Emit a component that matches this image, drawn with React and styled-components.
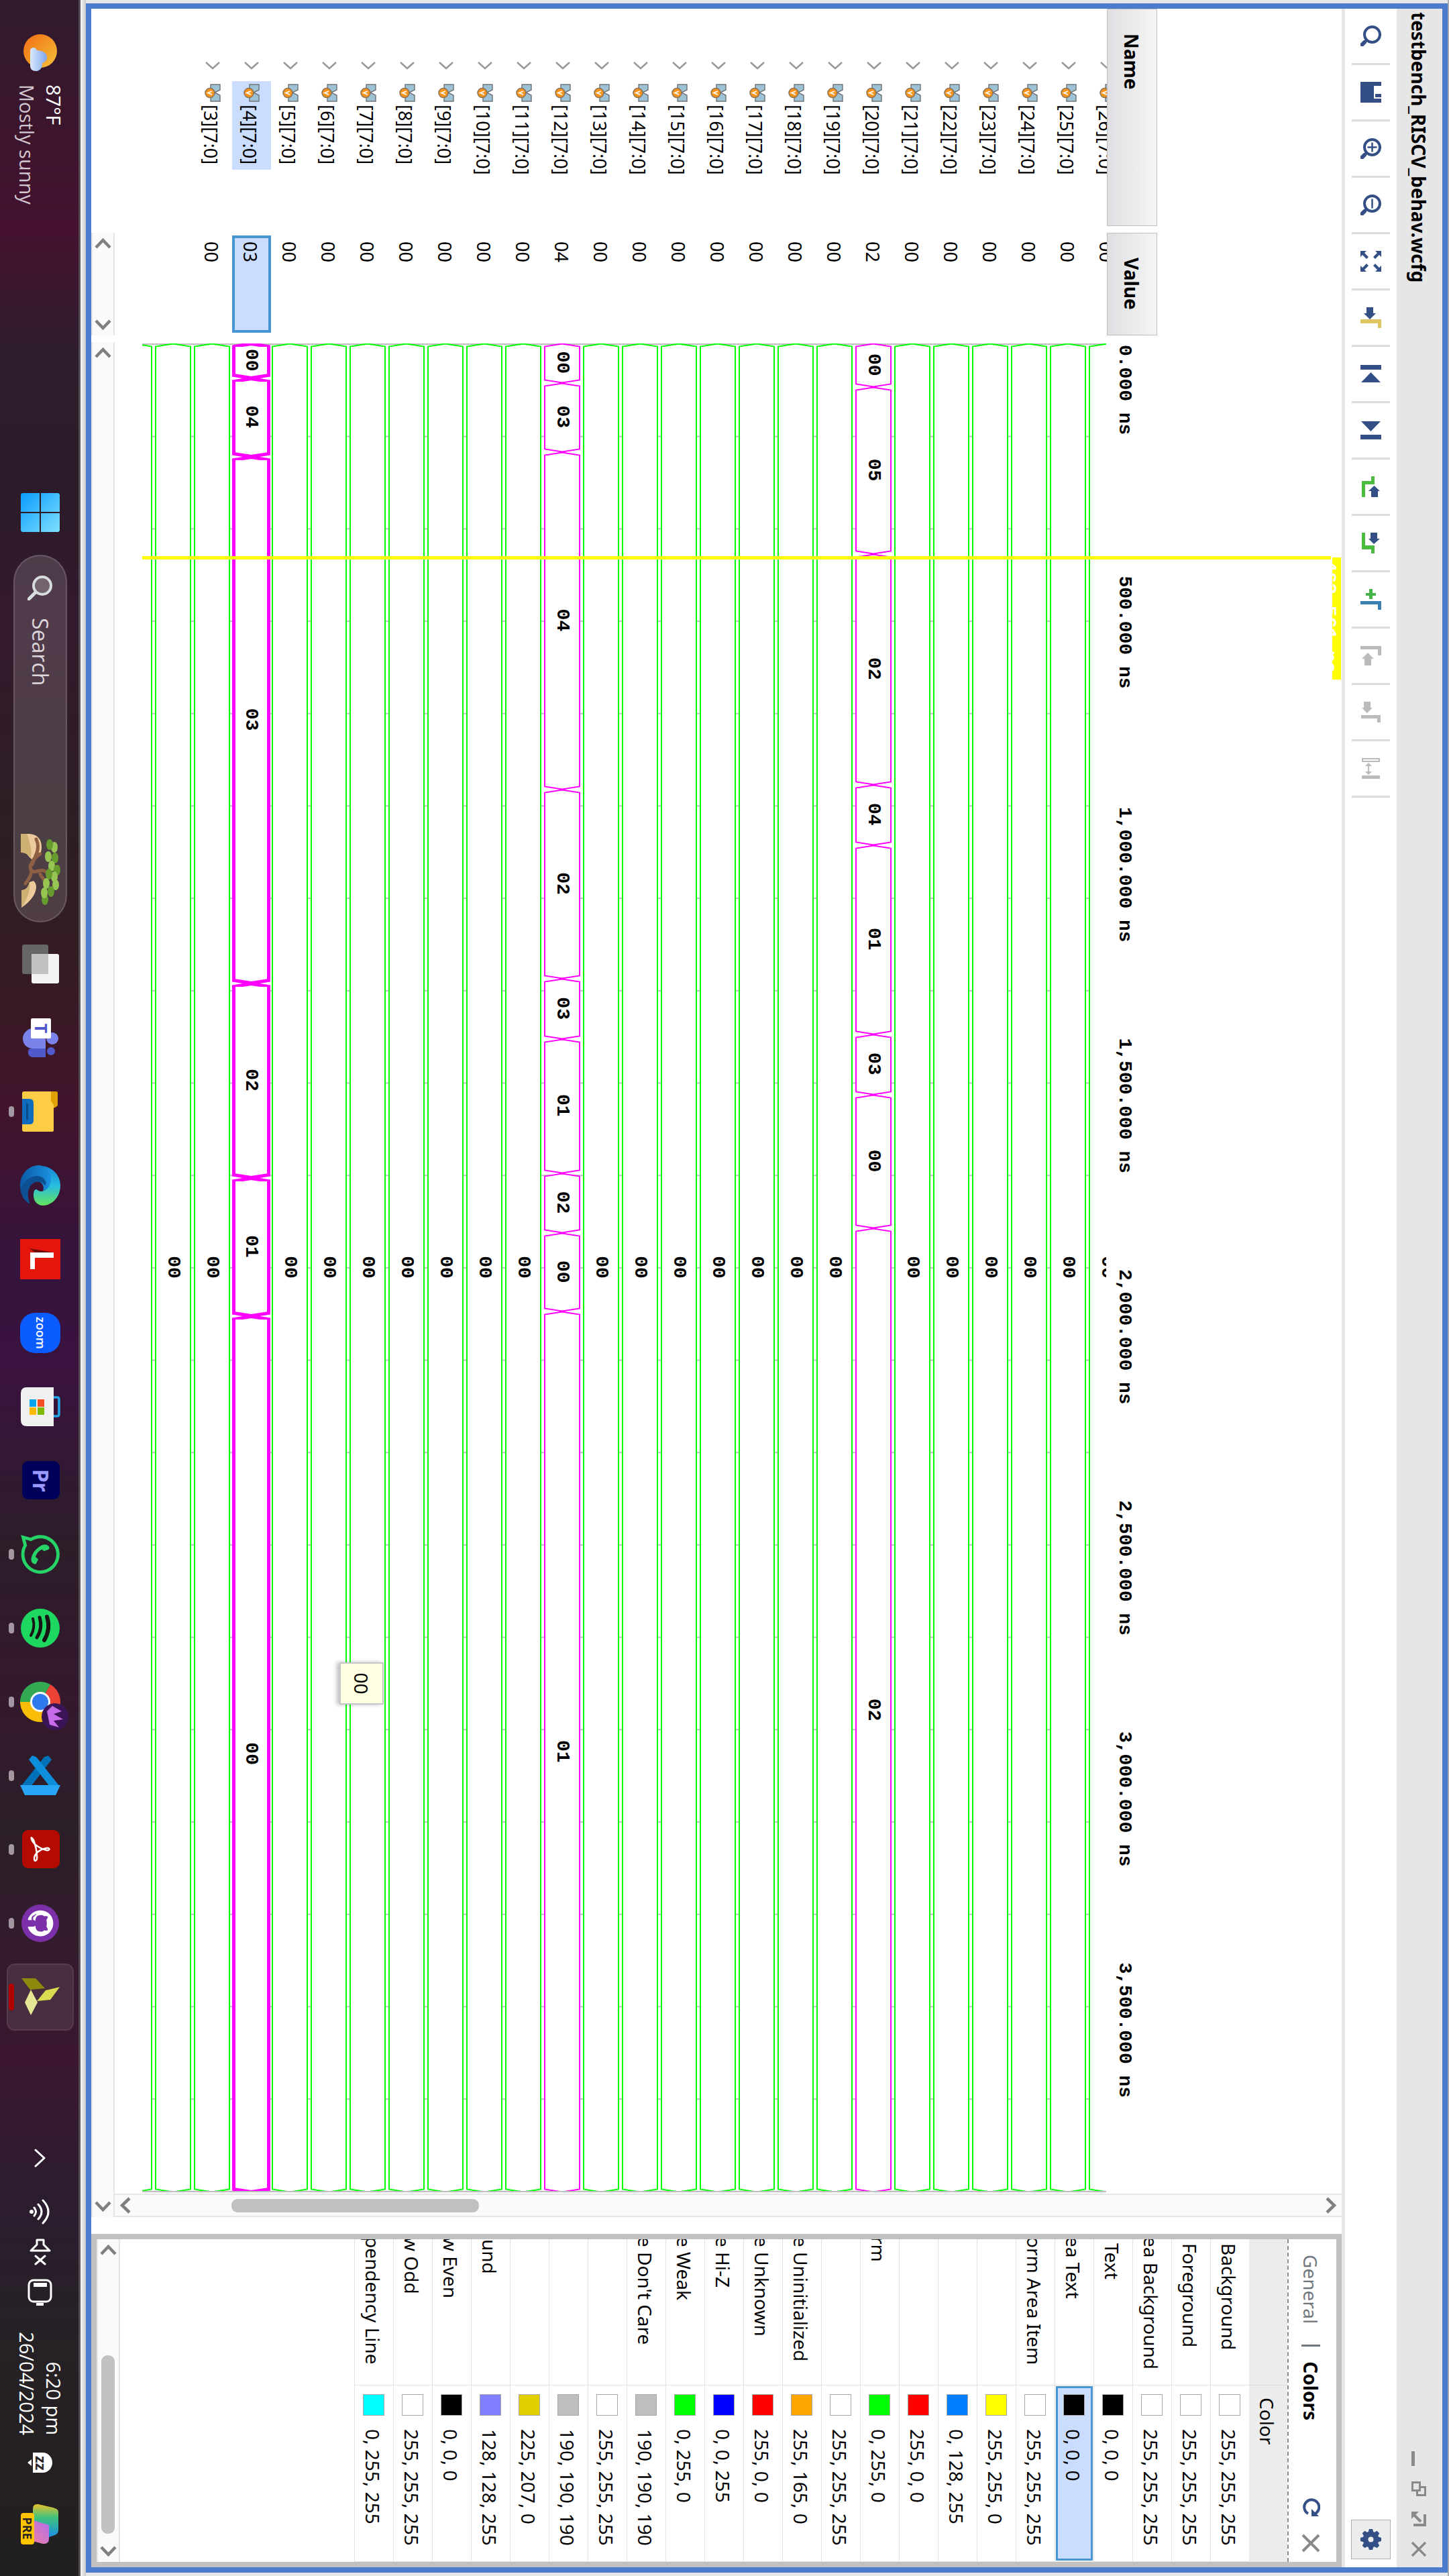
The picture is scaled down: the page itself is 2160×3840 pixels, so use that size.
import React from "react";
import styled, { createGlobalStyle } from "styled-components";
import { FaWhatsapp, FaGithub } from "react-icons/fa";

const NAVY = "#334f85";
const GREY = "#bbbbbb";
const UI = '"Noto Sans", "Open Sans", sans-serif';
const MONO = '"Liberation Mono", monospace';

const GlobalStyle = createGlobalStyle`
  html, body { margin: 0; height: 100%; overflow: hidden; background: #fff; }
  * { box-sizing: border-box; }
  button { font: inherit; color: inherit; padding: 0; margin: 0; border: 0; background: none; }
  ul { list-style: none; margin: 0; padding: 0; }
  svg { display: block; flex: none; }
`;

const Screen = styled.div`
  width: 100vh;
  height: 100vw;
  transform-origin: 0 0;
  transform: rotate(90deg) translateY(-100%);
  display: flex;
  flex-direction: column;
  font: 28px/38px ${UI};
  color: #000;
  overflow: hidden;
`;

const Desktop = styled.main`
  flex: 1;
  min-height: 0;
  display: flex;
  padding: 2px 5px 8px;
  background: linear-gradient(#a9a9a9 0 2px, #e6e6e6 2px calc(100% - 8px), #c9c9c9 calc(100% - 8px), #fafafa);
`;

const Window = styled.section`
  flex: 1;
  min-width: 0;
  display: flex;
  flex-direction: column;
  border: 8px solid #4a7bcf;
  background: #fff;
`;

const TitleBar = styled.header`
  height: 68px;
  flex: none;
  display: flex;
  align-items: center;
  justify-content: space-between;
  padding: 2px 16px 0 5px;
  background: #e6e6e6;
`;
const Title = styled.h1`
  margin: 0;
  font-size: 28px;
  line-height: 38px;
  font-weight: 700;
`;
const WindowButtons = styled.div`
  display: flex;
  gap: 23px;
`;
const IconButton = styled.button`
  display: flex;
  align-items: center;
  justify-content: center;
`;

const Toolbar = styled.div`
  height: 82px;
  flex: none;
  display: flex;
  align-items: center;
  padding-right: 12px;
  border-bottom: 5px solid #e6e6e6;
`;
const Tool = styled.button`
  width: 84px;
  height: 57px;
  display: flex;
  align-items: center;
  justify-content: center;
  border-right: 3px solid #dbdbdb;
`;
const SettingsButton = styled.button`
  width: 59px;
  height: 59px;
  margin-left: auto;
  display: flex;
  align-items: center;
  justify-content: center;
  border: 1px solid #b0b0b0;
  background: #ececec;
`;

const Body = styled.div`
  flex: 1;
  min-height: 0;
  display: flex;
`;

/* ---- signal lists ---- */
const SignalColumn = styled.div`
  flex: none;
  width: ${(p) => p.$width}px;
  margin-right: 10px;
  display: flex;
  flex-direction: column;
  padding-top: 275px;
`;
const ColumnHeader = styled.h2`
  margin: 0;
  flex: none;
  height: 75px;
  padding: 18px 0 0 36px;
  font-size: 28px;
  line-height: 38px;
  font-weight: 700;
  border: 1px solid #bdbdbd;
  background: linear-gradient(#f5f5f5, #dfdfe3);
`;
const ListView = styled.div`
  flex: 1;
  min-height: 0;
  overflow: hidden;
`;
const SignalList = styled.ul`
  margin-top: -30px;
`;
const SignalRow = styled.li`
  height: 58px;
  display: flex;
  align-items: center;
  padding-left: 79px;
  gap: 17px;
`;
const SignalName = styled.span`
  height: 58px;
  display: flex;
  align-items: center;
  gap: 4px;
  padding: 0 8px 0 4px;
  font-size: 27px;
  background: ${(p) => (p.$selected ? "#cbddfe" : "transparent")};
`;
const SignalText = styled.span`
  padding-top: 5px;
`;
const ValueRow = styled.li`
  height: 58px;
  margin: 0 4px;
  padding: ${(p) => (p.$selected ? "8px 5px 0" : "12px 9px 0")};
  font-size: 27px;
  border: ${(p) => (p.$selected ? "4px solid #4596d2" : "0")};
  background: ${(p) => (p.$selected ? "#cbddfe" : "transparent")};
`;

/* ---- scroll bars ---- */
const HBar = styled.div`
  flex: none;
  height: 35px;
  display: flex;
  align-items: center;
  justify-content: space-between;
  padding: 0 8px;
  background: #fafafa;
  border: solid #e6e6e6;
  border-width: 2px 0;
`;
const VBar = styled.div`
  flex: none;
  width: 35px;
  display: flex;
  flex-direction: column;
  align-items: center;
  padding: 8px 0;
  background: #fafafa;
  border: solid #e6e6e6;
  border-width: 0 2px;
`;
const Thumb = styled.div`
  width: ${(p) => p.$w};
  height: ${(p) => p.$h};
  border-radius: 9px;
  background: #c1c1c1;
`;
const Fill = styled.div`
  flex: ${(p) => p.$grow};
`;

/* ---- wave area ---- */
const WavePane = styled.div`
  flex: 1;
  min-width: 0;
  display: flex;
  flex-direction: column;
`;
const WaveMain = styled.div`
  flex: 1;
  min-height: 0;
  display: flex;
`;
const Chart = styled.div`
  flex: 1;
  min-width: 0;
  position: relative;
  display: flex;
  flex-direction: column;
  padding: 275px 2px 41px;
`;
const Ruler = styled.div`
  flex: none;
  height: 76px;
  display: flex;
`;
const Tick = styled.span`
  flex: 1 1 0;
  min-width: 0;
  padding: 33px 0 0 2px;
  font: 700 28px/32px ${MONO};
  white-space: nowrap;
`;
const Tracks = styled.div`
  flex: 1;
  min-height: 0;
  overflow: hidden;
  border-right: 2px solid #bebebe;
  background: linear-gradient(to right, #bebebe 2px, transparent 2px) 0 0 / 5% 100%;
`;
const TrackList = styled.ul`
  margin-top: -31px;
`;
const Track = styled.li`
  height: 58px;
  padding: ${(p) => (p.$selected ? "1px 0 0" : "3px 0 1px")};
  display: flex;
  margin-right: -2px;
`;
const Segment = styled.span`
  flex: ${(p) => p.$span} 1 0;
  min-width: 0;
  display: flex;
`;
const SegmentBody = styled.span`
  flex: 1;
  min-width: 0;
  display: flex;
  align-items: center;
  justify-content: center;
  padding-right: 2px;
  border: solid ${(p) => p.$color};
  border-width: ${(p) => p.$weight}px 0;
  background: #fff;
  font: 700 28px/32px ${MONO};
`;
const CursorLine = styled.div`
  position: absolute;
  top: 16px;
  bottom: 41px;
  left: calc(2px + 11.5%);
  width: 5px;
  background: #ff0;
`;
const CursorFlag = styled.div`
  position: absolute;
  top: 1px;
  left: calc(4px + 11.5%);
  width: 182px;
  height: 13px;
  padding: 2px 0 0 4px;
  overflow: hidden;
  background: #ff0;
  color: #fff;
  font: 700 28px/32px ${MONO};
  white-space: nowrap;
`;
const Tooltip = styled.div`
  position: absolute;
  top: 1428px;
  left: calc(100% - 792px);
  width: 63px;
  height: 66px;
  display: flex;
  align-items: center;
  justify-content: center;
  font-size: 28px;
  border: 2px solid #c6c6c6;
  background: #ffffe1;
  box-shadow: 0 4px 6px rgba(0, 0, 0, 0.25);
`;

/* ---- colour settings ---- */
const Panel = styled.aside`
  flex: none;
  width: 497px;
  margin-left: 25px;
  display: flex;
  flex-direction: column;
  border: 8px solid #c1c1c1;
`;
const PanelHead = styled.div`
  height: 73px;
  flex: none;
  display: flex;
  align-items: center;
  padding: 4px 14px 0 23px;
  border-bottom: 2px dashed #8d8d8d;
`;
const Tab = styled.button`
  font-weight: ${(p) => (p.$active ? 700 : 400)};
  color: ${(p) => (p.$active ? "#000" : "#70777c")};
`;
const TabRule = styled.span`
  width: 3px;
  height: 28px;
  margin: 0 22px 0 31px;
  background: #6f7a80;
`;
const PanelActions = styled.div`
  margin-left: auto;
  display: flex;
  gap: 26px;
`;
const TableView = styled.div`
  flex: 1;
  min-height: 0;
  overflow: hidden;
`;
const ColorTable = styled.table`
  width: 100%;
  table-layout: fixed;
  border-collapse: separate;
  border-spacing: 0;
  th, td { height: 58px; padding: 0; text-align: left; font-weight: 400; }
  th { height: 57px; background: #ececec; padding-top: 3px; }
`;
const NameHead = styled.th`
  width: 218px;
  border-right: 1px solid #dcdcdc;
`;
const ColorHead = styled.th`
  span { padding-left: 18px; }
`;
const NameCell = styled.td`
  border: solid #e2e2e2;
  border-width: 0 1px 1px 0;
`;
const NameText = styled.div`
  overflow: hidden;
  white-space: nowrap;
  padding-top: 3px;
  text-indent: ${(p) => p.$indent}px;
`;
const ColorCell = styled.td`
  border-bottom: 1px solid #e2e2e2;
  border-right: 1px solid #e2e2e2;
`;
const ColorBox = styled.div`
  height: 55px;
  margin: 0 1px;
  padding-left: ${(p) => (p.$selected ? 9 : 12)}px;
  display: flex;
  align-items: center;
  gap: 20px;
  border: ${(p) => (p.$selected ? "3px solid #4596d2" : "0")};
  background: ${(p) => (p.$selected ? "#cbddfe" : "transparent")};
`;
const Swatch = styled.span`
  width: 32px;
  height: 32px;
  flex: none;
  border: 1px solid #a6a6a6;
  background: rgb(${(p) => p.$rgb});
`;
const Rgb = styled.span`
  padding-top: 3px;
  white-space: nowrap;
`;

/* ---- taskbar ---- */
const Taskbar = styled.footer`
  height: 120px;
  flex: none;
  display: flex;
  align-items: center;
  border-top: 3px solid #514a50;
  background: linear-gradient(to right, #2f1b2b 0, #3c152d 5%, #45122f 9%, #2c1e2c 14%, #2a1c28 18%, #33192c 24%,
    #2c1e24 32%, #331c22 37%, #42142c 43%, #35133c 49%, #3a123f 53%, #2c1d29 60%, #34182d 66%, #2b1f28 71%,
    #331c2c 75%, #3b1730 80%, #2c1c30 85%, #252125 91%, #221f20 100%);
  color: #fff;
  font: 29px/40px "Open Sans", "Noto Sans", sans-serif;
  padding: 0 46px 3px 50px;
`;
const Weather = styled.button`
  display: flex;
  align-items: center;
  gap: 18px;
  width: 664px;
  text-align: left;
`;
const Lines = styled.span`
  display: flex;
  flex-direction: column;
  text-align: ${(p) => p.$align || "left"};
`;
const Muted = styled.span`
  color: #d3c7cf;
`;
const Slot = styled.button`
  position: relative;
  width: 100px;
  height: 100px;
  flex: none;
  margin-right: 10px;
  display: flex;
  align-items: center;
  justify-content: center;
  border-radius: 12px;
  background: ${(p) => (p.$active ? "rgba(255,255,255,.09)" : "transparent")};
  box-shadow: ${(p) => (p.$active ? "inset 0 0 0 2px rgba(255,255,255,.07)" : "none")};
`;
const RunningDot = styled.span`
  position: absolute;
  bottom: 3px;
  width: ${(p) => (p.$active ? 40 : 16)}px;
  height: 8px;
  border-radius: 4px;
  background: ${(p) => (p.$active ? "#b00000" : "#a397a1")};
`;
const SearchBox = styled.label`
  width: 548px;
  height: 80px;
  flex: none;
  margin: 0 12px 0 3px;
  padding: 0 18px 0 28px;
  display: flex;
  align-items: center;
  gap: 26px;
  border-radius: 40px;
  border: 2px solid rgba(255, 255, 255, 0.14);
  background: rgba(255, 255, 255, 0.15);
`;
const SearchInput = styled.input`
  flex: 1;
  min-width: 0;
  border: 0;
  padding: 0;
  outline: 0;
  background: none;
  font: 32px/40px "Open Sans", "Noto Sans", sans-serif;
  color: #dcd5da;
  &::placeholder { color: #dcd5da; opacity: 1; }
`;
const Tray = styled.div`
  margin-left: auto;
  display: flex;
  align-items: center;
`;
const TrayIcons = styled.div`
  display: flex;
  align-items: center;
  gap: 20px;
  margin: 0 39px 0 46px;
`;
const TrayGap = styled.div`
  width: ${(p) => p.$w}px;
`;

/* ---- toolbar drawings, 31 units square ---- */
const Svg = ({ s = 31, w, h, box, children, ...rest }) => (
  <svg width={w || s} height={h || s} viewBox={box || `0 0 ${w || s} ${h || s}`} fill="none" aria-hidden="true" {...rest}>
    {children}
  </svg>
);
const Lens = ({ children }) => (
  <Svg>
    <circle cx="13.5" cy="13.5" r="11.5" stroke={NAVY} strokeWidth="4" />
    <path d="M22 22l2 2" stroke={NAVY} strokeWidth="4" />
    <path d="M25 25l3.500 3.500" stroke={NAVY} strokeWidth="6" strokeLinecap="round" />
    {children}
  </Svg>
);
const toolIcons = [
  ["Find", <Lens />],
  ["Save", <Svg><path fill={NAVY} fillRule="evenodd" d="M0 0H6V11H25V0H31V31H0ZM18 0h5v9h-5Z" /></Svg>],
  ["Zoom in", <Lens><path d="M6.500 13.500h14M13.500 6.500v14" stroke={NAVY} strokeWidth="2.500" /></Lens>],
  ["Zoom out", <Lens><path d="M6.500 13.500h14" stroke={NAVY} strokeWidth="2.500" /></Lens>],
  ["Zoom fit", <Svg><path fill={NAVY} d="M0 0h9l-3 3 6 6-3 3-6-6-3 3ZM31 0v9l-3-3-6 6-3-3 6-6-3-3ZM0 31v-9l3 3 6-6 3 3-6 6 3 3ZM31 31h-9l3-3-6-6 3-3 6 6 3-3Z" /></Svg>],
  ["Go to cursor", <Svg><path fill="#dfc663" d="M18 0h13v5h-7v26h-6Z" /><path fill={NAVY} d="M0 12h9V8l9 9-9 9v-4H0Z" /></Svg>],
  ["Go to start", <Svg><path fill={NAVY} d="M2 0h7v31H2ZM13 15.500 28 1v29Z" /></Svg>],
  ["Go to end", <Svg><path fill={NAVY} d="M2 1l15 14.500L2 30ZM22 0h7v31h-7Z" /></Svg>],
  ["Previous transition", <Svg><path fill="#4cbb3f" d="M0 10h12v14h19v5H7V15H0Z" /><path fill={NAVY} d="M14 10.500 22 2v3h9v10h-9v4Z" /></Svg>],
  ["Next transition", <Svg><path fill="#4cbb3f" d="M0 24h19V10h12v5h-6v14H0Z" /><path fill={NAVY} d="M0 6h9V2l8 9-8 8v-3H0Z" /></Svg>],
  ["Add marker", <Svg><path fill="#3a80b0" d="M18 0h13v5h-8v26h-5Z" /><path fill="#46b449" d="M6 8h4v5h5v5h-5v5H6v-5H0v-5h6Z" /></Svg>],
  ["Previous marker", <Svg><path fill={GREY} d="M1 0h14v5H6v26H1ZM11 20l9-9v4h10v10H20v4Z" /></Svg>],
  ["Next marker", <Svg><path fill={GREY} d="M20 1h11v5h-6v24h-5ZM0 16h9v-3l8 8-8 8v-3H0Z" /></Svg>],
  ["Swap cursors", <Svg><path stroke={GREY} strokeWidth="2" d="M1 3h4v25H1Z" /><path fill={GREY} d="M26 2h5v27h-5ZM7 19l5-5v4h8v-4l5 5-5 5v-4h-8v4Z" /></Svg>],
];
const Gear = () => (
  <Svg>
    <circle cx="15.500" cy="15.500" r="8" stroke={NAVY} strokeWidth="8" />
    {[0, 45, 90, 135, 180, 225, 270, 315].map((a) => (
      <path key={a} fill={NAVY} transform={`rotate(${a} 15.5 15.5)`} d="M11.500 5 13 0h5l1.500 5Z" />
    ))}
  </Svg>
);
const windowIcons = [
  ["Minimize", <Svg s={22}><path fill="#8a8a8a" d="M0 17h22v5H0Z" /></Svg>],
  ["Restore", <Svg s={22}><path stroke="#8a8a8a" strokeWidth="3" d="M1.500 9.500h12v11h-12ZM8.500 9.500v-8h12v12h-7" /></Svg>],
  ["Float", <Svg s={22}><path stroke="#8a8a8a" strokeWidth="4" d="M4 2h16v17M15 8 5 18" /><path fill="#8a8a8a" d="M0 22v-11l11 11Z" /></Svg>],
  ["Close", <Svg s={22}><path stroke="#8a8a8a" strokeWidth="3.500" d="M1 1l20 20M21 1 1 21" /></Svg>],
];

const arrows = {
  left: [16, 25, "M14 2 3 12.5 14 23"],
  right: [16, 25, "M2 2 13 12.5 2 23"],
  up: [25, 16, "M2 14 12.5 3 23 14"],
  down: [25, 16, "M2 2 12.5 13 23 2"],
};
const Arrow = ({ dir }) => {
  const [w, h, d] = arrows[dir];
  return (
    <IconButton aria-label={`Scroll ${dir}`}>
      <Svg w={w} h={h}><path d={d} stroke="#808080" strokeWidth="4.500" /></Svg>
    </IconButton>
  );
};

const Expand = () => (
  <Svg w={12} h={22}><path d="M1 1l9 10-9 10" stroke="#999" strokeWidth="2.500" /></Svg>
);
const BusIcon = () => (
  <Svg w={27} h={24}>
    <path d="M1 1h8l4 8 4-8h9v14H1Z" fill="#9dc1d5" stroke="#71777b" strokeWidth="1.500" />
    <circle cx="13.500" cy="16" r="7" fill="#f7941e" stroke="#8b7355" strokeWidth="1.500" />
    <path d="M11 13l2.500 6 2.500-6" stroke="#fff" strokeWidth="1.800" />
  </Svg>
);

/* ---- signal data ---- */
const END = 4000;
const changes = {
  4: [[0, "00"], [75, "04"], [245, "03"], [1385, "02"], [1805, "01"], [2105, "00"]],
  12: [[0, "00"], [85, "03"], [235, "04"], [965, "02"], [1375, "03"], [1505, "01"], [1795, "02"], [1925, "00"], [2095, "01"]],
  20: [[0, "00"], [95, "05"], [455, "02"], [955, "04"], [1085, "01"], [1495, "03"], [1625, "00"], [1915, "02"]],
};
const values = { 4: "03", 12: "04", 20: "02" };
const SELECTED = 4;
const indices = Array.from({ length: 26 }, (_, i) => 26 - i);
const listed = indices.filter((n) => n >= 3);

const Cap = ({ flip, color, weight }) => {
  const o = weight / 2;
  return (
    <svg width="5" height="100%" viewBox="0 0 5 54" preserveAspectRatio="none" overflow="visible"
      transform={flip ? "scale(-1 1)" : undefined} aria-hidden="true">
      <path d={`M5 ${o}H4.500L.500 27 4.500 ${54 - o}H5`} fill="#fff" stroke={color} strokeWidth={weight} />
    </svg>
  );
};

const Waveform = ({ n }) => {
  const list = changes[n] || [[0, "00"]];
  const color = changes[n] ? "#ff00ff" : "#00ff00";
  const weight = n === SELECTED ? 5 : 2;
  return (
    <Track $selected={n === SELECTED}>
      {list.map(([t, v], i) => (
        <Segment key={t} $span={(i + 1 < list.length ? list[i + 1][0] : END) - t}>
          <Cap color={color} weight={weight} />
          <SegmentBody $color={color} $weight={weight}>{v}</SegmentBody>
          <Cap flip color={color} weight={weight} />
        </Segment>
      ))}
    </Track>
  );
};

const colorRows = [
  ["Background", "255, 255, 255", 6],
  ["Foreground", "255, 255, 255", 6],
  ["ea Background", "255, 255, 255", -4],
  ["Text", "0, 0, 0", 6],
  ["ea Text", "0, 0, 0", -4],
  ["orm Area Item", "255, 255, 255", -4],
  ["", "255, 255, 0"],
  ["", "0, 128, 255"],
  ["", "255, 0, 0"],
  ["rm", "0, 255, 0", -4],
  ["", "255, 255, 255"],
  ["e Uninitialized", "255, 165, 0", -4],
  ["e Unknown", "255, 0, 0", -4],
  ["e Hi-Z", "0, 0, 255", -4],
  ["e Weak", "0, 255, 0", -4],
  ["e Don't Care", "190, 190, 190", -4],
  ["", "255, 255, 255"],
  ["", "190, 190, 190"],
  ["", "225, 207, 0"],
  ["und", "128, 128, 255", 0],
  ["w Even", "0, 0, 0", -4],
  ["w Odd", "255, 255, 255", -4],
  ["pendency Line", "0, 255, 255", -4],
];
const SELECTED_COLOR = 4;

const ticks = ["0.000 ns", "500.000 ns", "1,000.000 ns", "1,500.000 ns", "2,000.000 ns", "2,500.000 ns", "3,000.000 ns", "3,500.000 ns"];

/* ---- taskbar drawings ---- */
const WindowsLogo = () => (
  <Svg s={58}>
    <defs><linearGradient id="win" x1="0" y1="1" x2="1" y2="0"><stop stopColor="#0a9bff" /><stop offset="1" stopColor="#7fe0ff" /></linearGradient></defs>
    <path fill="url(#win)" d="M2 0H28V28H0V2ZM30 0H56l2 2V28H30ZM0 30H28V58H2L0 56ZM30 30H58V56l-2 2H30Z" />
  </Svg>
);
const SunCloud = () => (
  <Svg s={58}>
    <defs>
      <linearGradient id="sun" x1="0" y1="1" x2="1" y2="0"><stop stopColor="#f26a12" /><stop offset="1" stopColor="#f3c43a" /></linearGradient>
      <linearGradient id="cloud" x1="0" y1="0" x2="0" y2="1"><stop stopColor="#7fa6ee" /><stop offset="1" stopColor="#dbe9fd" /></linearGradient>
    </defs>
    <circle cx="26" cy="29" r="25" fill="url(#sun)" />
    <path fill="url(#cloud)" d="M26 44c-6 0-7-8-1-10 0-8 4-15 10-15 6 0 8 4 9 7 7-1 12 4 12 9 0 6-3 9-8 9Z" />
  </Svg>
);
const leaves = [[20, 9], [16, 16], [34, 18], [36, 8], [48, 13], [54, 5], [64, 9], [60, 17], [76, 7], [86, 14], [74, 21], [98, 23], [88, 24]];
const Bonsai = () => (
  <Svg w={112} h={60}>
    <path fill="#ecca9c" d="M0 59V46C1 34 8 28 20 28c12 0 16 6 20 12l-5 6c-6 4-8 8-7 13ZM70 40c6-6 12-4 18-2 10 4 18 14 22 20H84c0-6-4-10-12-12Z" />
    <path fill="#cdb072" d="M0 59V50c10-4 24-8 36-6-6 4-8 9-8 15ZM72 46c12-2 26 4 38 12H84c0-6-4-10-12-12Z" />
    <path d="M8 36c10-5 22-2 34 6 8 6 16 2 14-6-1-6-4-10 2-16M30 30c4 8 10 10 16 12M60 30c6-2 8-8 16-8M52 44c8-2 14 2 22 8" stroke="#8f5f43" strokeWidth="5" strokeLinecap="round" />
    {leaves.map(([x, y], i) => (
      <ellipse key={i} cx={x} cy={y} rx="8" ry="5" fill={i % 2 ? "#689b2e" : "#96c651"} />
    ))}
  </Svg>
);
const TaskView = () => (
  <Svg s={60}><rect y="18" x="1" width="44" height="39" rx="3" fill="#666" /><rect x="15" y="2" width="44" height="41" rx="3" fill="#f2f2f2" /><path fill="#c2c2c2" d="M15 18h30v25H15Z" /></Svg>
);
const Teams = () => (
  <Svg s={60}>
    <circle cx="31" cy="12" r="9" fill="#7b83eb" /><circle cx="50" cy="14" r="6" fill="#5059c9" />
    <path fill="#5059c9" d="M38 22h21v19c0 8-9 8-12 6Z" /><path fill="#7b83eb" d="M16 22h30v18c0 12-8 16-15 16s-15-6-15-16Z" />
    <rect x="1" y="14" width="30" height="30" rx="2" fill="#fff" />
    <text x="16" y="38" textAnchor="middle" fontFamily="Open Sans" fontWeight="700" fontSize="25" fill="#5059c9">T</text>
  </Svg>
);
const Folder = () => (
  <Svg s={60}>
    <path fill="#e0a100" d="M0 6q0-2 2-2h18q2 0 4 4l2 6H0Z" /><path fill="#ffcd45" d="M0 14q10 0 14 0l6-4h38q2 0 2 3v41q0 3-3 3H3q-3 0-3-3Z" />
    <path fill="#0f6cbd" d="M11 57V46q0-6 6-6h26q6 0 6 6v11Z" /><path fill="#0a4a86" d="M18 48h24v3H18Z" />
  </Svg>
);
const Edge = () => (
  <Svg s={60}>
    <defs>
      <linearGradient id="e1" x1="0" y1="0" x2="1" y2="0"><stop stopColor="#1583d6" /><stop offset=".5" stopColor="#27bde0" /><stop offset="1" stopColor="#63e35c" /></linearGradient>
      <linearGradient id="e2" x1="0" y1="0" x2="0" y2="1"><stop stopColor="#1a91e0" /><stop offset="1" stopColor="#0c59a4" /></linearGradient>
    </defs>
    <path fill="url(#e1)" d="M1 26C4 10 16 0 30 0c18 0 30 13 30 26 0 9-7 14-15 14-7 0-9-2-9-4s3-3 3-7c0-6-6-11-14-11C14 18 4 20 1 26Z" />
    <path fill="url(#e2)" d="M0 32C1 20 10 14 20 14c10 0 17 5 18 12-8-3-15 3-14 10 1 8 12 14 24 12 4 0 6-2 8-2 1 0 1 1 0 2-6 8-16 12-26 12C14 60 0 48 0 32Z" />
    <path fill="#0d4f93" d="M24 22c-8 4-9 12-7 19 3 10 11 17 21 18 8-1 14-5 18-11 1-1 0-2-1-1-14 5-28-1-30-11-1-5 0-10 5-13-2-2-4-2-6-1Z" />
  </Svg>
);
const LMark = () => (
  <Svg s={60}><path fill="#e5170c" d="M0 0h60v60H0Z" /><path fill="#6d0a06" d="M14 46l6-36v28Z" /><path fill="#fff" d="M20 10h8v28h17v7H20Z" /></Svg>
);
const Zoom = () => (
  <Svg s={60}><rect width="60" height="60" rx="22" fill="#0b5cff" /><text x="30" y="36" textAnchor="middle" fontFamily="Open Sans" fontWeight="600" fontSize="18" fill="#fff">zoom</text></Svg>
);
const Store = () => (
  <Svg s={60}>
    <path d="M16 12V5q0-3 3-3h22q3 0 3 3v7" stroke="#22a7e8" strokeWidth="3.500" />
    <path fill="#f0f0f0" d="M1 10h58v40q0 9-9 9H10q-9 0-9-9Z" />
    <path fill="#f25022" d="M19 24h11v10H19Z" /><path fill="#7fba00" d="M31 24h11v10H31Z" /><path fill="#00a4ef" d="M19 36h11v10H19Z" /><path fill="#ffb900" d="M31 36h11v10H31Z" />
  </Svg>
);
const Premiere = () => (
  <Svg s={60}><rect x="1" y="1" width="57" height="56" rx="9" fill="#00005b" /><text x="30" y="41" textAnchor="middle" fontFamily="Open Sans" fontWeight="700" fontSize="32" fill="#9999ff">Pr</text></Svg>
);
const Spotify = () => (
  <Svg s={60}><circle cx="30" cy="30" r="29" fill="#1ed760" /><g stroke="#191414" strokeLinecap="round"><path d="M13 20q18-6 35 4" strokeWidth="6" /><path d="M14 31q16-5 30 4" strokeWidth="5" /><path d="M16 41q13-4 25 3" strokeWidth="4" /></g></Svg>
);
const Chrome = () => (
  <Svg s={60} overflow="visible">
    <path fill="#ea4335" d="M30 30 4 15A30 30 0 0 1 56 15Z" /><path fill="#fbbc05" d="M30 30 56 15A30 30 0 0 1 30 60Z" /><path fill="#34a853" d="M30 30v30A30 30 0 0 1 4 15Z" />
    <circle cx="30" cy="30" r="15" fill="#fff" /><circle cx="30" cy="30" r="12" fill="#2f7bed" />
    <circle cx="52" cy="8" r="20" fill="#3b1458" />
    <path d="M36 12l8-14 4 12 8-14 2 14 10-8-4 14-20 4Z" fill="#c86be8" />
  </Svg>
);
const VsCode = () => (
  <Svg s={60}><path fill="#0070b8" d="M0 18l6-5 40 31v15L2 24Z" /><path fill="#0d8fdc" d="M0 42l6 5L46 16V1L2 36Z" /><path fill="#29a5f5" d="M44 0l15 7v46l-15 7Z" /></Svg>
);
const Acrobat = () => (
  <Svg s={60}><rect x="1" y="1" width="57" height="56" rx="9" fill="#b30b00" /><path d="M14 43c6-1 14-10 17-22 1-6-4-6-3 0 2 10 8 18 16 18 5 0 3-5-4-4-8 0-16 2-24 5-5 3-4 4-2 3Z" stroke="#fff" strokeWidth="2.500" /></Svg>
);
const GithubDesktop = () => (
  <Svg s={60}><circle cx="30" cy="30" r="28" fill="#7b2fa8" /><FaGithub x="10" y="10" size="40" color="#fff" /></Svg>
);
const Vivado = () => (
  <Svg s={58}><path fill="#8c8a0c" d="M1 57V36l15-14 2 22Z" /><path fill="#d8dc50" d="M14 0l19 14 2 20-16-13Z" /><path fill="#e6e794" d="M18 43l19-10 19 10-19 9Z" /></Svg>
);

const apps = [
  ["Task View", <TaskView />],
  ["Teams", <Teams />],
  ["File Explorer", <Folder />, true],
  ["Edge", <Edge />],
  ["L", <LMark />],
  ["Zoom", <Zoom />],
  ["Store", <Store />],
  ["Premiere", <Premiere />],
  ["WhatsApp", <FaWhatsapp size={66} color="#25d366" />, true],
  ["Spotify", <Spotify />, true],
  ["Chrome", <Chrome />, true],
  ["VS Code", <VsCode />, true],
  ["Acrobat", <Acrobat />, true],
  ["GitHub Desktop", <GithubDesktop />, true],
];

const stroke = { stroke: "#fff", strokeWidth: 3, strokeLinecap: "round", strokeLinejoin: "round" };

export default function App() {
  return (
    <Screen>
      <GlobalStyle />
      <Desktop>
        <Window>
          <TitleBar>
            <Title>testbench_RISCV_behav.wcfg</Title>
            <WindowButtons>
              {windowIcons.map(([label, icon]) => <IconButton key={label} aria-label={label}>{icon}</IconButton>)}
            </WindowButtons>
          </TitleBar>
          <Toolbar>
            {toolIcons.map(([label, icon]) => <Tool key={label} aria-label={label}>{icon}</Tool>)}
            <SettingsButton aria-label="Settings"><Gear /></SettingsButton>
          </Toolbar>
          <Body>
            <SignalColumn $width={324}>
              <ColumnHeader>Name</ColumnHeader>
              <ListView>
                <SignalList>
                  {listed.map((n) => (
                    <SignalRow key={n}>
                      <Expand />
                      <SignalName $selected={n === SELECTED}>
                        <BusIcon />
                        <SignalText>[{n}][7:0]</SignalText>
                      </SignalName>
                    </SignalRow>
                  ))}
                </SignalList>
              </ListView>
            </SignalColumn>
            <SignalColumn $width={153}>
              <ColumnHeader>Value</ColumnHeader>
              <ListView>
                <SignalList>
                  {listed.map((n) => <ValueRow key={n} $selected={n === SELECTED}>{values[n] || "00"}</ValueRow>)}
                </SignalList>
              </ListView>
              <HBar><Arrow dir="left" /><Arrow dir="right" /></HBar>
            </SignalColumn>
            <WavePane>
              <WaveMain>
                <Chart>
                  <Ruler>{ticks.map((t) => <Tick key={t}>{t}</Tick>)}</Ruler>
                  <Tracks>
                    <TrackList>{indices.map((n) => <Waveform key={n} n={n} />)}</TrackList>
                  </Tracks>
                  <CursorLine />
                  <CursorFlag>463.561 ns</CursorFlag>
                  <Tooltip role="tooltip">00</Tooltip>
                </Chart>
                <VBar>
                  <Arrow dir="up" />
                  <Fill $grow={1260} />
                  <Thumb $w="20px" $h="369px" />
                  <Fill $grow={150} />
                  <Arrow dir="down" />
                </VBar>
              </WaveMain>
              <HBar><Arrow dir="left" /><Arrow dir="right" /></HBar>
            </WavePane>
            <Panel>
              <PanelHead>
                <Tab>General</Tab>
                <TabRule />
                <Tab $active>Colors</Tab>
                <PanelActions>
                  <IconButton aria-label="Reset">
                    <Svg s={28}><path d="M24 18a11 11 0 1 1 1-8" stroke={NAVY} strokeWidth="4" /><path fill={NAVY} d="M28 2v11H17Z" /></Svg>
                  </IconButton>
                  <IconButton aria-label="Close panel">
                    <Svg s={28}><path d="M2 2l24 24M26 2 2 26" stroke="#8a8a8a" strokeWidth="4" /></Svg>
                  </IconButton>
                </PanelActions>
              </PanelHead>
              <TableView>
                <ColorTable>
                  <thead><tr><NameHead /><ColorHead><span>Color</span></ColorHead></tr></thead>
                  <tbody>
                    {colorRows.map(([name, rgb, indent], i) => (
                      <tr key={i}>
                        <NameCell><NameText $indent={indent || 0}>{name}</NameText></NameCell>
                        <ColorCell>
                          <ColorBox $selected={i === SELECTED_COLOR}><Swatch $rgb={rgb} /><Rgb>{rgb}</Rgb></ColorBox>
                        </ColorCell>
                      </tr>
                    ))}
                  </tbody>
                </ColorTable>
              </TableView>
              <HBar>
                <Arrow dir="left" />
                <Fill $grow={147} />
                <Thumb $w="266px" $h="20px" />
                <Fill $grow={18} />
                <Arrow dir="right" />
              </HBar>
            </Panel>
          </Body>
        </Window>
      </Desktop>
      <Taskbar>
        <Weather>
          <SunCloud />
          <Lines><span>87°F</span><Muted>Mostly sunny</Muted></Lines>
        </Weather>
        <Slot aria-label="Start"><WindowsLogo /></Slot>
        <SearchBox>
          <Svg s={38}><circle cx="16" cy="16" r="13" stroke="#d9dcdf" strokeWidth="4" fill="rgba(255,255,255,.2)" /><path d="M26 26l10 10" stroke="#d9dcdf" strokeWidth="5" strokeLinecap="round" /></Svg>
          <SearchInput type="text" placeholder="Search" aria-label="Search" />
          <Bonsai />
        </SearchBox>
        {apps.map(([label, icon, running]) => (
          <Slot key={label} aria-label={label}>{icon}{running && <RunningDot />}</Slot>
        ))}
        <Slot $active aria-label="Vivado"><Vivado /><RunningDot $active /></Slot>
        <Tray>
          <IconButton aria-label="Hidden icons"><Svg w={28} h={18}><path d="M2 16 14 3l12 13" {...stroke} /></Svg></IconButton>
          <TrayIcons>
            <Svg s={40}><path d="M3 16q17-16 34 0M9 23q11-10 22 0M14 29q6-5 12 0" {...stroke} /><circle cx="20" cy="33" r="3" fill="#fff" /></Svg>
            <Svg s={40}><path d="M2 15h7l9-9v28l-9-9H2ZM26 13l12 14M38 13 26 27" {...stroke} /></Svg>
            <Svg s={40}><rect x="2" y="4" width="32" height="33" rx="7" {...stroke} /><path fill="#fff" d="M6 10h6v20H6ZM36 15h4v11h-4Z" /></Svg>
          </TrayIcons>
          <Lines $align="right"><span>6:20 pm</span><span>26/04/2024</span></Lines>
          <TrayGap $w={22} />
          <Svg s={38}><path fill="#fff" d="M4 30V16C4 6 12 1 19 1s15 5 15 15v14ZM14 32h10l-5 6Z" /><text x="9" y="26" fontFamily="Open Sans" fontWeight="700" fontSize="22" fill="#2b2427">zz</text></Svg>
          <TrayGap $w={42} />
          <Svg s={62}>
            <defs><linearGradient id="cp" x1="0" y1="0" x2="1" y2="0"><stop stopColor="#e9c12c" /><stop offset=".4" stopColor="#3fc27a" /><stop offset="1" stopColor="#1b8fe6" /></linearGradient>
              <linearGradient id="cq" x1="0" y1="0" x2="1" y2="1"><stop stopColor="#b06cf2" /><stop offset="1" stopColor="#f4839b" /></linearGradient></defs>
            <path fill="url(#cp)" d="M12 4h28q6 0 8 8l2 6H36L26 42H8Q0 42 1 34L6 12Q8 4 12 4Z" /><path fill="url(#cq)" d="M32 18h20q9 0 8 9l-5 19q-2 6-9 6H22Z" />
            <rect x="14" y="40" width="47" height="20" rx="4" fill="#ffc400" /><text x="37" y="57" textAnchor="middle" fontFamily="Open Sans" fontWeight="700" fontSize="18" fill="#222">PRE</text>
          </Svg>
        </Tray>
      </Taskbar>
    </Screen>
  );
}
